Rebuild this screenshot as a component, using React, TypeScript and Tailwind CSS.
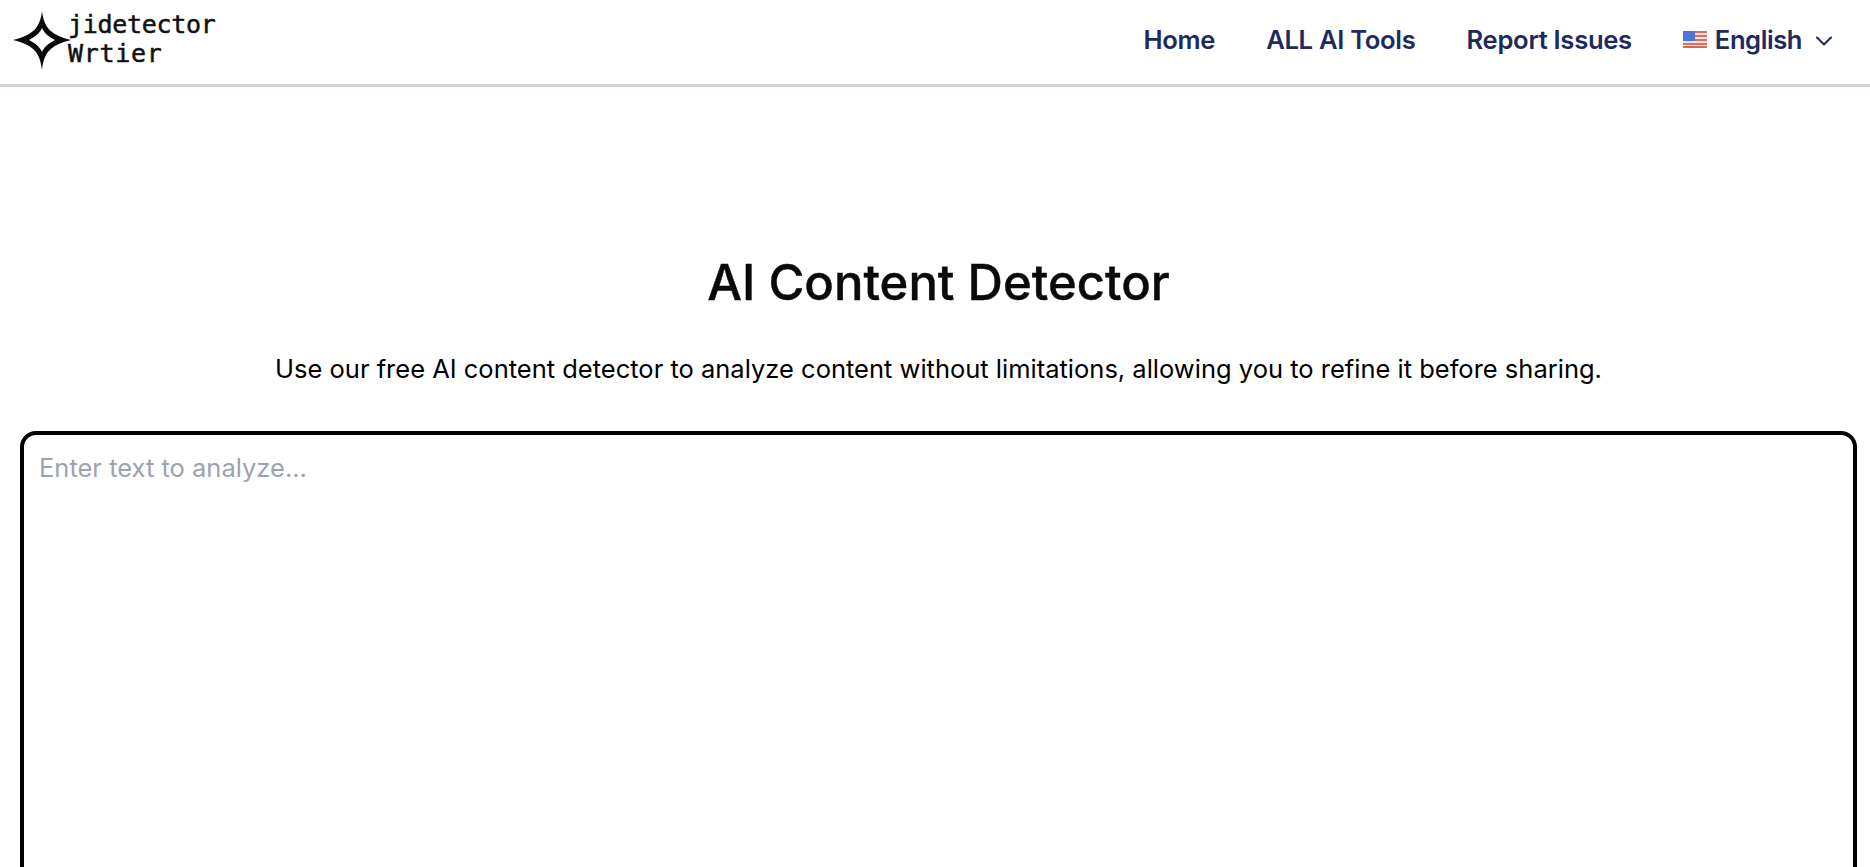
import React from "react";
import { ChevronDown } from "lucide-react";

function Logo() {
  return (
    <div className="flex items-center">
      <svg width="76" height="68" viewBox="0 8 76 68" className="block shrink-0">
        <path
          d="M42 11 C44 27 50 35 71 40 C50 45 44 53 42 70 C40 53 34 45 13 40 C34 35 40 27 42 11 Z M42 28 C40 33 35 37 29 40 C35 43 40 47 42 52 C44 47 49 43 55 40 C49 37 44 33 42 28 Z"
          fillRule="evenodd"
          fill="#0a0a0a"
        />
      </svg>
      <div className="-mt-[7px] -ml-[8px] flex flex-col font-['DejaVu_Sans_Mono',monospace] text-[25px] leading-[29px] tracking-[-0.3px] text-[#111] [-webkit-text-stroke:0.5px_#111]">
        <span>jidetector</span>
        <span className="tracking-[0.7px]">Wrtier</span>
      </div>
    </div>
  );
}

function Flag() {
  return (
    <svg width="24" height="17" viewBox="0 0 24 17" className="block blur-[0.4px]">
      <rect width="24" height="17" fill="#f3e3e0" />
      <rect y="0" width="24" height="2" fill="#dc6f65" />
      <rect y="4" width="24" height="2" fill="#dc6f65" />
      <rect y="8" width="24" height="2" fill="#dc6f65" />
      <rect y="12" width="24" height="2" fill="#dc6f65" />
      <rect y="15" width="24" height="2" fill="#cf6a5f" />
      <rect width="12" height="10" fill="#4f74d6" />
    </svg>
  );
}

export default function App() {
  return (
    <div className="min-h-screen bg-white font-['Inter',sans-serif]">
      <header className="flex h-[87px] items-center justify-between border-b-[3px] border-[#d1d5db] pr-[32px]">
        <Logo />
        <nav className="flex items-center gap-[51px] pb-[4px] text-[25.6px] font-semibold tracking-[-0.3px] text-[#1e2a5e]">
          <span>Home</span>
          <span>ALL AI Tools</span>
          <span>Report Issues</span>
          <span className="flex items-center">
            <Flag />
            <span className="ml-2 tracking-[-0.45px]">English</span>
            <ChevronDown size={28} strokeWidth={1.75} className="ml-2 mt-[3px]" />
          </span>
        </nav>
      </header>
      <main className="pl-5 pr-[13px] pt-[166px]">
        <h1 className="text-center text-[49px] leading-[60px] font-medium text-[#0a0a0a] [-webkit-text-stroke:0.4px_#0a0a0a]">AI Content Detector</h1>
        <p className="mt-[37px] text-center text-[25.5px] leading-[38px] text-black">
          Use our free AI content detector to analyze content without limitations, allowing you to refine it before sharing.
        </p>
        <div className="mt-[43px] h-[500px] rounded-2xl border-4 border-black pl-[15px] pr-4 pt-[15px] text-[25.5px] leading-[36px] text-[#9ca3af]">
          Enter text to analyze...
        </div>
      </main>
    </div>
  );
}
